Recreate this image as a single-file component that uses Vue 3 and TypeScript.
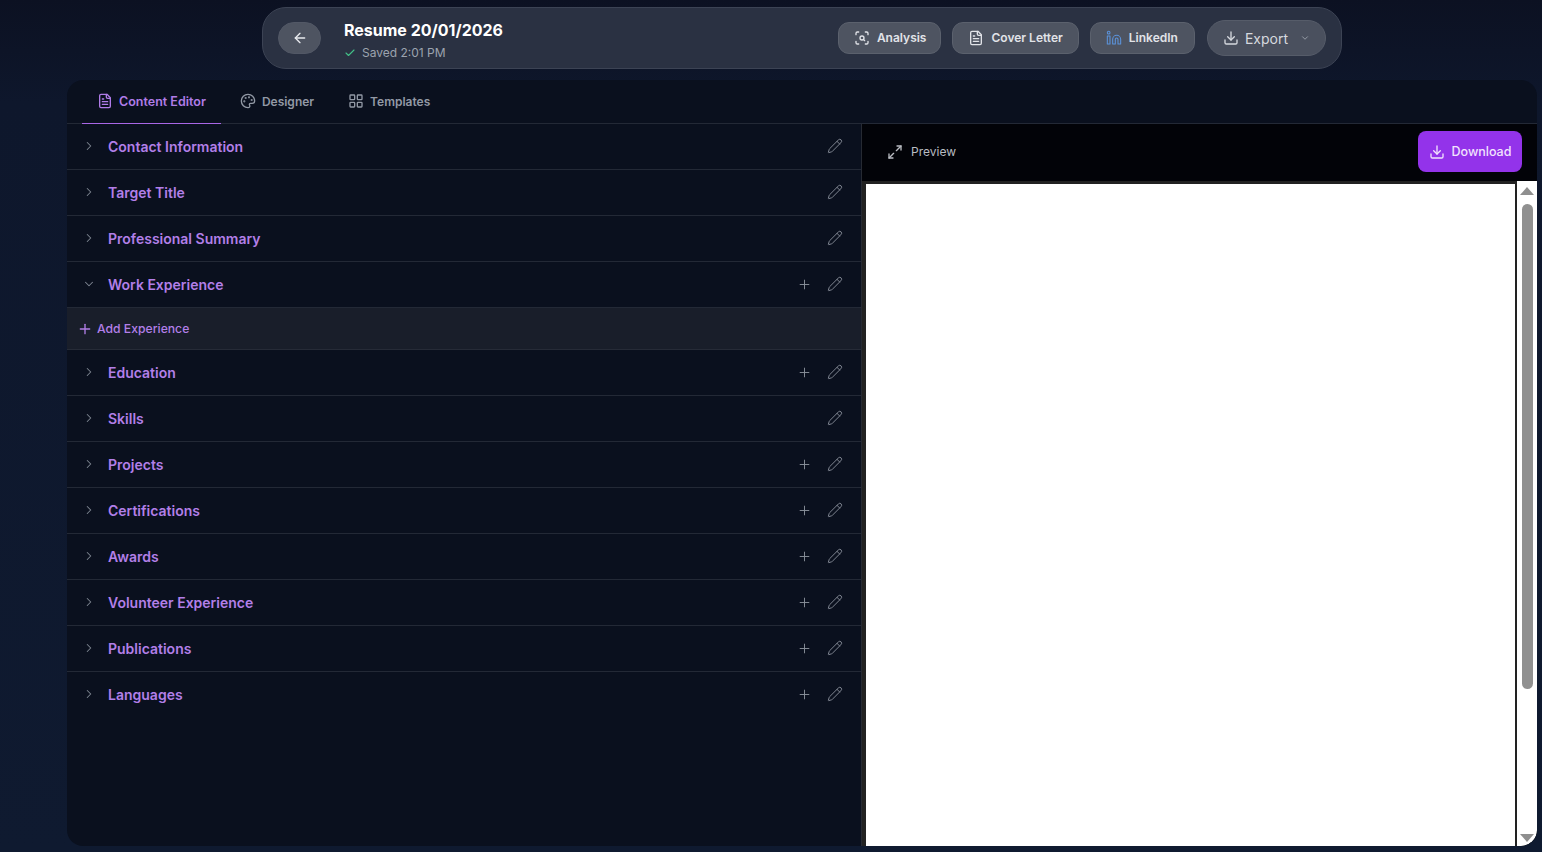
<script setup lang="ts">
interface Section {
  title: string;
  add: boolean;
  open?: boolean;
}

const sections: Section[] = [
  { title: "Contact Information", add: false },
  { title: "Target Title", add: false },
  { title: "Professional Summary", add: false },
  { title: "Work Experience", add: true, open: true },
  { title: "Education", add: true },
  { title: "Skills", add: false },
  { title: "Projects", add: true },
  { title: "Certifications", add: true },
  { title: "Awards", add: true },
  { title: "Volunteer Experience", add: true },
  { title: "Publications", add: true },
  { title: "Languages", add: true },
];
</script>

<template>
  <div class="page">
    <header class="topbar">
      <button class="back">
        <svg width="16" height="16" viewBox="0 0 24 24" class="ic"><path d="m12 19-7-7 7-7" /><path d="M19 12H5" /></svg>
      </button>
      <div class="doc">
        <div class="doc-title">Resume 20/01/2026</div>
        <div class="doc-saved">
          <svg width="12" height="12" viewBox="0 0 24 24" class="ic saved-check"><path d="M20 6 9 17l-5-5" /></svg>
          <span>Saved 2:01 PM</span>
        </div>
      </div>
      <div class="actions">
        <button class="act act-analysis">
          <svg width="16" height="16" viewBox="0 0 24 24" class="ic"><path d="M3 7V5a2 2 0 0 1 2-2h2" /><path d="M17 3h2a2 2 0 0 1 2 2v2" /><path d="M21 17v2a2 2 0 0 1-2 2h-2" /><path d="M7 21H5a2 2 0 0 1-2-2v-2" /><circle cx="12" cy="12" r="3" /><path d="m16 16-1.9-1.9" /></svg>
          <span>Analysis</span>
        </button>
        <button class="act">
          <svg width="16" height="16" viewBox="0 0 24 24" class="ic"><path d="M15 2H6a2 2 0 0 0-2 2v16a2 2 0 0 0 2 2h12a2 2 0 0 0 2-2V7Z" /><path d="M14 2v4a2 2 0 0 0 2 2h4" /><path d="M10 9H8" /><path d="M16 13H8" /><path d="M16 17H8" /></svg>
          <span>Cover Letter</span>
        </button>
        <button class="act act-linkedin">
          <svg width="16" height="16" viewBox="0 0 24 24" class="ic li"><path d="M16 8a6 6 0 0 1 6 6v7h-4v-7a2 2 0 0 0-2-2 2 2 0 0 0-2 2v7h-4v-7a6 6 0 0 1 6-6z" /><rect x="2" y="9" width="4" height="12" /><circle cx="4" cy="4" r="2" /></svg>
          <span>LinkedIn</span>
        </button>
        <button class="export">
          <svg width="16" height="16" viewBox="0 0 24 24" class="ic"><path d="M12 15V3" /><path d="M21 15v4a2 2 0 0 1-2 2H5a2 2 0 0 1-2-2v-4" /><path d="m7 10 5 5 5-5" /></svg>
          <span>Export</span>
          <svg width="10" height="10" viewBox="0 0 24 24" class="ic caret"><path d="m6 9 6 6 6-6" /></svg>
        </button>
      </div>
    </header>

    <main class="panel">
      <nav class="tabs">
        <div class="tab active">
          <svg width="16" height="16" viewBox="0 0 24 24" class="ic"><path d="M15 2H6a2 2 0 0 0-2 2v16a2 2 0 0 0 2 2h12a2 2 0 0 0 2-2V7Z" /><path d="M14 2v4a2 2 0 0 0 2 2h4" /><path d="M10 9H8" /><path d="M16 13H8" /><path d="M16 17H8" /></svg>
          Content Editor
        </div>
        <div class="tab">
          <svg width="16" height="16" viewBox="0 0 24 24" class="ic"><path d="M12 22a10 10 0 1 1 10-10c0 2.2-1.8 3.5-3.8 3.5h-2.4a1.8 1.8 0 0 0-1.3 3c.6.7.3 3.5-2.5 3.5Z" /><circle cx="13.5" cy="6.5" r=".6" /><circle cx="17.5" cy="10.5" r=".6" /><circle cx="6.5" cy="12.5" r=".6" /><circle cx="8.5" cy="7.5" r=".6" /></svg>
          Designer
        </div>
        <div class="tab">
          <svg width="16" height="16" viewBox="0 0 24 24" class="ic"><rect x="3" y="3" width="7" height="7" rx="1" /><rect x="14" y="3" width="7" height="7" rx="1" /><rect x="14" y="14" width="7" height="7" rx="1" /><rect x="3" y="14" width="7" height="7" rx="1" /></svg>
          Templates
        </div>
      </nav>

      <div class="split">
        <section class="editor">
          <template v-for="s in sections" :key="s.title">
            <div class="row">
              <svg width="14" height="14" viewBox="0 0 24 24" class="ic chev">
                <path :d="s.open ? 'm6 9 6 6 6-6' : 'm9 18 6-6-6-6'" />
              </svg>
              <span class="row-title">{{ s.title }}</span>
              <svg v-if="s.add" width="15" height="15" viewBox="0 0 24 24" class="ic row-add"><path d="M5 12h14" /><path d="M12 5v14" /></svg>
              <svg width="16" height="16" viewBox="0 0 24 24" class="ic row-edit"><path d="M21.17 6.81a2.82 2.82 0 0 0-3.99-3.99L3.84 16.17a2 2 0 0 0-.5.83l-1.32 4.35a.5.5 0 0 0 .62.62l4.35-1.32a2 2 0 0 0 .83-.5z" /><path d="m15 5 4 4" /></svg>
            </div>
            <div v-if="s.open" class="add-row">
              <svg width="16" height="16" viewBox="0 0 24 24" class="ic"><path d="M5 12h14" /><path d="M12 5v14" /></svg>
              Add Experience
            </div>
          </template>
        </section>

        <section class="preview">
          <div class="preview-head">
            <div class="preview-label">
              <svg width="16" height="16" viewBox="0 0 24 24" class="ic"><path d="M15 3h6v6" /><path d="m21 3-7 7" /><path d="m3 21 7-7" /><path d="M9 21H3v-6" /></svg>
              Preview
            </div>
            <button class="download">
              <svg width="16" height="16" viewBox="0 0 24 24" class="ic"><path d="M12 15V3" /><path d="M21 15v4a2 2 0 0 1-2 2H5a2 2 0 0 1-2-2v-4" /><path d="m7 10 5 5 5-5" /></svg>
              <span>Download</span>
            </button>
          </div>
          <div class="viewer">
            <div class="sheet-wrap"><div class="sheet"></div></div>
            <div class="scrollbar">
              <span class="arrow up"></span>
              <span class="thumb"></span>
              <span class="arrow down"></span>
            </div>
          </div>
        </section>
      </div>
    </main>
  </div>
</template>

<style>
html,
body {
  margin: 0;
  height: 100%;
  overflow: hidden;
  background: #0f172a;
}
</style>

<style scoped>
.page {
  height: 852px;
  box-sizing: border-box;
  padding: 7px 5px 6px 67px;
  display: flex;
  flex-direction: column;
  align-items: center;
  gap: 11px;
  background: linear-gradient(180deg, #0c1122 0%, #0e172c 12%, #0f1a30 100%);
  font-family: Inter, "Noto Sans", sans-serif;
}

button {
  font-family: inherit;
  cursor: pointer;
}

.ic {
  fill: none;
  stroke: currentColor;
  stroke-width: 2;
  stroke-linecap: round;
  stroke-linejoin: round;
  flex: none;
}

.topbar {
  width: 1080px;
  height: 62px;
  box-sizing: border-box;
  padding: 0 15px;
  display: flex;
  align-items: center;
  background: #2a3142;
  border: 1px solid #3c4354;
  border-radius: 24px;
}

.back {
  width: 43px;
  height: 32px;
  display: flex;
  align-items: center;
  justify-content: center;
  padding: 0;
  border: 1px solid #525866;
  border-radius: 16px;
  background: #4e5461;
  color: #e8eaee;
}

.doc {
  margin-left: 23px;
  margin-top: 5px;
}

.doc-title {
  color: #fff;
  font-size: 16px;
  font-weight: 700;
  line-height: 22px;
}

.doc-saved {
  display: flex;
  align-items: center;
  gap: 6px;
  margin-top: 3px;
  color: #9ca3af;
  font-size: 12px;
  line-height: 18px;
}

.saved-check {
  color: #43c088;
  stroke-width: 2.2;
}

.actions {
  margin-left: auto;
  display: flex;
  align-items: center;
  gap: 11px;
}

.act {
  height: 32px;
  box-sizing: border-box;
  padding: 0 15px;
  display: flex;
  align-items: center;
  gap: 7px;
  border: 1px solid #5b616d;
  border-radius: 11px;
  background: #4e5461;
  color: #e1e3e8;
  font-size: 12px;
  font-weight: 600;
}

.act span {
  margin-bottom: 2px;
}

.act-analysis {
  padding-right: 14px;
}

.act-linkedin {
  padding-right: 16px;
}

.li {
  color: #5b93dc;
  stroke-width: 1.6;
}

.export {
  height: 36px;
  box-sizing: border-box;
  margin-left: 1px;
  padding: 0 15px;
  display: flex;
  align-items: center;
  gap: 6px;
  border: 1px solid #565c69;
  border-radius: 18px;
  background: #4a505e;
  color: #d6d9df;
  font-size: 14px;
}

.caret {
  margin-left: 6px;
  color: #a4a9b3;
}

.panel {
  align-self: stretch;
  flex: 1;
  min-height: 0;
  display: flex;
  flex-direction: column;
  overflow: hidden;
  background: #0a101e;
  border-radius: 16px;
}

.tabs {
  height: 44px;
  box-sizing: border-box;
  flex: none;
  padding-left: 15px;
  display: flex;
  gap: 4px;
  border-bottom: 1px solid #232936;
}

.tab {
  height: 44px;
  box-sizing: border-box;
  padding: 0 15px 1px;
  display: flex;
  align-items: center;
  gap: 6px;
  color: #9299a5;
  font-size: 12px;
  font-weight: 600;
  border-bottom: 1px solid transparent;
}

.tab.active {
  color: #b07ce8;
  font-size: 12.5px;
  border-bottom-color: #a966e6;
}

.split {
  flex: 1;
  min-height: 0;
  display: flex;
}

.editor {
  width: 795px;
  flex: none;
  box-sizing: border-box;
  border-right: 1px solid #262a33;
}

.row {
  height: 46px;
  box-sizing: border-box;
  padding: 0 18.5px 1px 15px;
  display: flex;
  align-items: center;
  border-bottom: 1px solid #232936;
}

.row:last-of-type {
  border-bottom-color: transparent;
}

.chev {
  color: #7e8591;
  stroke-width: 1.8;
}

.row-title {
  margin-left: 12px;
  color: #b27fe8;
  font-size: 14px;
  font-weight: 560;
}

.row-add {
  margin-left: auto;
  color: #8a909b;
  stroke-width: 1.5;
}

.row-edit {
  margin-left: 15px;
  color: #808692;
  stroke-width: 1.5;
}

.row-title + .row-edit {
  margin-left: auto;
}

.add-row {
  height: 42px;
  box-sizing: border-box;
  padding-left: 10px;
  display: flex;
  align-items: center;
  gap: 4px;
  background: #191e2a;
  border-bottom: 1px solid #262b37;
  color: #b27fe8;
  font-size: 12.2px;
  font-weight: 500;
}

.preview {
  flex: 1;
  min-width: 0;
  display: flex;
  flex-direction: column;
  background: #222;
}

.preview-head {
  height: 57px;
  box-sizing: border-box;
  padding: 0 15px 2px 25px;
  flex: none;
  display: flex;
  align-items: center;
  justify-content: space-between;
  background: #020308;
}

.preview-label {
  display: flex;
  align-items: center;
  gap: 8px;
  color: #b9bcc2;
  font-size: 12px;
}

.download {
  width: 104px;
  height: 41px;
  display: flex;
  align-items: center;
  justify-content: center;
  gap: 7px;
  padding: 0;
  border: 0;
  border-radius: 8px;
  background: #9333ea;
  color: #f1e3fd;
  font-size: 12.5px;
  font-weight: 500;
}

.download span {
  margin-bottom: 1px;
}

.viewer {
  flex: 1;
  min-height: 0;
  display: flex;
}

.sheet-wrap {
  flex: 1;
  padding: 3px 2px 0 4px;
  display: flex;
}

.sheet {
  flex: 1;
  background: #fff;
}

.scrollbar {
  width: 20px;
  flex: none;
  box-sizing: border-box;
  padding: 6px 0 4px;
  display: flex;
  flex-direction: column;
  align-items: center;
  background: #fff;
  border-bottom-right-radius: 16px;
}

.thumb {
  width: 11px;
  height: 485px;
  margin-top: 9px;
  border-radius: 6px;
  background: #909090;
}

.arrow {
  width: 0;
  height: 0;
  border-left: 7px solid transparent;
  border-right: 7px solid transparent;
}

.arrow.up {
  border-bottom: 8px solid #8f8f8f;
}

.arrow.down {
  margin-top: auto;
  border-top: 8px solid #8f8f8f;
}
</style>
